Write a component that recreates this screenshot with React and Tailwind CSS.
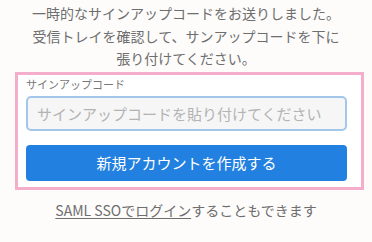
import React from 'react'

export default function App() {
  return (
    <div
      className="w-[372px] h-[242px] bg-[#fdfcfb] text-[#6e6e6e] overflow-hidden"
      style={{ fontFamily: '"Noto Sans CJK JP", "Noto Sans", sans-serif' }}
    >
      {/* Intro message */}
      <div className="pt-[2px] text-center text-[14px] leading-[22.5px]">
        <p>一時的なサインアップコードをお送りしました。</p>
        <p>受信トレイを確認して、サンアップコードを下に</p>
        <p>張り付けてください。</p>
      </div>

      {/* Signup form */}
      <div className="mt-[2px] ml-[15px] w-[349px] border-[3px] border-[#f4aecb] bg-white pl-[8px] pr-[14px] pt-[1px] pb-[6px]">
        <label className="block text-[11px] leading-[16px] text-[#777777]">サインアップコード</label>
        <input
          className="mt-[4px] block w-full h-[35px] rounded-[5px] border-2 border-[#a3c7ea] bg-[#f6f6f6] px-[9px] text-[15px] text-[#555555] placeholder-[#b3b3b3] outline-none"
          placeholder="サインアップコードを貼り付けてください"
        />
        <button className="mt-[14px] block w-full h-[36px] rounded-[4px] bg-[#2280e0] text-white text-[15px] leading-[36px]">
          新規アカウントを作成する
        </button>
      </div>

      {/* SSO link */}
      <p className="mt-[10px] text-center text-[14px] leading-[20px]">
        <a className="underline underline-offset-[2px]">SAML SSOでログイン</a>
        することもできます
      </p>
    </div>
  )
}
